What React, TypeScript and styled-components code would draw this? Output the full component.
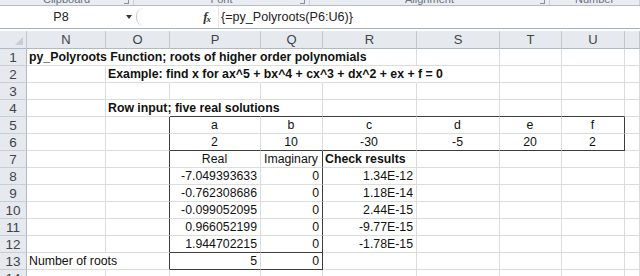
import React from "react";
import styled, { createGlobalStyle } from "styled-components";

const Global = createGlobalStyle`
  html, body { margin: 0; padding: 0; background: #fff; overflow: hidden; }
  body { font-family: "Liberation Sans", Arial, sans-serif; }
`;

const Page = styled.div`
  width: 640px;
  height: 276px;
  overflow: hidden;
  display: flex;
  flex-direction: column;
  background: #fff;
  & > * { flex-shrink: 0; }
`;

/* ---------- ribbon remnant ---------- */
const Ribbon = styled.div`
  height: 5px;
  display: flex;
  background: #e9edf2;
  border-bottom: 1px solid #b6bcc6;
  overflow: hidden;
`;

const RibbonGroup = styled.div<{ $w: number }>`
  width: ${(p) => p.$w}px;
  flex: none;
  position: relative;
  display: flex;
  align-items: flex-end;
  justify-content: center;
  border-right: 1px solid #c9cfd7;
  box-sizing: border-box;
`;

const RibbonLabel = styled.span`
  font-size: 11px;
  line-height: 11px;
  height: 11px;
  color: #6a6f76;
  white-space: nowrap;
`;

const Launcher = styled.span`
  position: absolute;
  right: 4px;
  bottom: 1px;
  width: 4px;
  height: 3px;
  border-right: 1px solid #8a9099;
  border-bottom: 1px solid #8a9099;
`;

/* ---------- formula bar ---------- */
const FormulaBar = styled.div`
  height: 22px;
  display: flex;
  align-items: stretch;
  background: #fff;
  border-bottom: 1px solid #a9b3c0;
`;

const NameBox = styled.div`
  width: 122px;
  flex: none;
  display: flex;
  align-items: center;
  justify-content: center;
  font-size: 12.6px;
  color: #222;
`;

const DropArrow = styled.div`
  width: 14px;
  flex: none;
  display: flex;
  align-items: center;
  justify-content: center;
  &::after {
    content: "";
    border-left: 3.5px solid transparent;
    border-right: 3.5px solid transparent;
    border-top: 4px solid #333;
  }
`;

const Grip = styled.div`
  width: 12px;
  flex: none;
  display: flex;
  align-items: center;
  &::before {
    content: "";
    width: 8px;
    height: 18px;
    border-left: 1.5px solid #c6ccd4;
    border-radius: 9px 0 0 9px;
    box-sizing: border-box;
  }
`;

const FxArea = styled.div`
  width: 70px;
  flex: none;
  display: flex;
  align-items: center;
  justify-content: flex-end;
  padding-right: 8px;
  box-sizing: border-box;
`;

const Fx = styled.span`
  font-family: "Liberation Serif", "Times New Roman", serif;
  font-style: italic;
  font-weight: bold;
  font-size: 13px;
  color: #333;
  letter-spacing: -1px;
  sub {
    font-size: 9px;
    vertical-align: -1px;
  }
`;

const FormulaInput = styled.div`
  flex: 1;
  display: flex;
  align-items: center;
  padding-left: 2px;
  font-size: 12.6px;
  color: #222;
  border-left: 1px solid #e3e6ea;
  white-space: nowrap;
`;

/* ---------- sheet ---------- */
const Sheet = styled.div`
  margin-top: 2px;
  display: grid;
  grid-template-columns: 27px 79px 64px 91px 62px 94px 83px 62px 63px 15px;
  grid-auto-rows: 17px;
  grid-template-rows: 18px;
`;

const Corner = styled.div`
  background: #e6e9ee;
  border-right: 1px solid #c3c8cf;
  border-bottom: 1px solid #b0b8c3;
  box-sizing: border-box;
  position: relative;
  &::after {
    content: "";
    position: absolute;
    right: 3px;
    bottom: 3px;
    border-left: 8px solid transparent;
    border-bottom: 8px solid #c9ced5;
  }
`;

const ColHead = styled.div`
  background: #e6e9ee;
  border-right: 1px solid #c3c8cf;
  border-bottom: 1px solid #b0b8c3;
  box-sizing: border-box;
  display: flex;
  align-items: center;
  justify-content: center;
  font-size: 13px;
  color: #3f4449;
`;

const RowHead = styled.div`
  background: #e6e9ee;
  border-right: 1px solid #b0b8c3;
  border-bottom: 1px solid #c9ced5;
  box-sizing: border-box;
  display: flex;
  align-items: center;
  justify-content: center;
  font-size: 13.5px;
  color: #3f4449;
`;

type Edge = "g" | "n" | "d";
const edgeColor = (e: Edge) => (e === "d" ? "#3d3d3d" : e === "n" ? "transparent" : "#dadcdd");

const Cell = styled.div<{ $r: Edge; $b: Edge; $align: string; $bold: boolean }>`
  box-sizing: border-box;
  border-right: 1px solid ${(p) => edgeColor(p.$r)};
  border-bottom: 1px solid ${(p) => edgeColor(p.$b)};
  font-size: 12.3px;
  line-height: 16px;
  color: #111;
  font-weight: ${(p) => (p.$bold ? 700 : 400)};
  text-align: ${(p) => p.$align};
  padding: 0 3px 0 2px;
  white-space: nowrap;
  overflow: visible;
  position: relative;
  z-index: ${(p) => (p.$r === "n" ? 1 : 0)};
`;

type CellSpec = { t?: string; a?: "l" | "c" | "r"; b?: boolean; r?: Edge; bb?: Edge };

const COLS = ["N", "O", "P", "Q", "R", "S", "T", "U", ""];

const empty = (): CellSpec => ({});

const rows: CellSpec[][] = [];
for (let i = 0; i < 15; i++) rows.push(COLS.map(empty));

const set = (row: number, col: number, s: CellSpec) => {
  rows[row - 1][col] = { ...rows[row - 1][col], ...s };
};

// text
set(1, 0, { t: "py_Polyroots Function; roots of higher order polynomials", b: true, r: "n" });
[1, 2, 3].forEach((c) => set(1, c, { r: "n" }));
set(2, 1, { t: "Example: find x for ax^5 + bx^4 + cx^3 + dx^2 + ex + f = 0", b: true, r: "n" });
[2, 3, 4].forEach((c) => set(2, c, { r: "n" }));
set(4, 1, { t: "Row input; five real solutions", b: true, r: "n" });
set(4, 2, { r: "n" });

const letters = ["a", "b", "c", "d", "e", "f"];
const coefs = ["2", "10", "-30", "-5", "20", "2"];
letters.forEach((l, i) => {
  set(5, i + 2, { t: l, a: "c" });
  set(6, i + 2, { t: coefs[i], a: "c" });
  set(4, i + 2, { bb: "d" });
  set(6, i + 2, { bb: "d" });
});
set(5, 1, { r: "d" });
set(6, 1, { r: "d" });
set(5, 7, { r: "d" });
set(6, 7, { r: "d" });

set(7, 2, { t: "Real", a: "c" });
set(7, 3, { t: "Imaginary", a: "c" });
set(7, 4, { t: "Check results", b: true });

const real = ["-7.049393633", "-0.762308686", "-0.099052095", "0.966052199", "1.944702215"];
const check = ["1.34E-12", "1.18E-14", "2.44E-15", "-9.77E-15", "-1.78E-15"];
real.forEach((v, i) => {
  set(8 + i, 2, { t: v, a: "r" });
  set(8 + i, 3, { t: "0", a: "r" });
  set(8 + i, 4, { t: check[i], a: "r" });
});
for (let r = 7; r <= 13; r++) {
  set(r, 1, { r: "d" });
  set(r, 3, { r: "d" });
}
set(12, 2, { bb: "d" });
set(12, 3, { bb: "d" });
set(13, 2, { bb: "d", t: "5", a: "r" });
set(13, 3, { bb: "d", t: "0", a: "r" });
set(13, 0, { t: "Number of roots", r: "n" });

const alignMap = { l: "left", c: "center", r: "right" };

const ribbonGroups = [
  { w: 134, label: "Clipboard", launcher: true },
  { w: 176, label: "Font", launcher: true },
  { w: 240, label: "Alignment", launcher: true },
  { w: 90, label: "Number", launcher: false },
];

export default function App() {
  return (
    <Page>
      <Global />
      <Ribbon>
        {ribbonGroups.map((g) => (
          <RibbonGroup key={g.label} $w={g.w}>
            <RibbonLabel>{g.label}</RibbonLabel>
            {g.launcher && <Launcher />}
          </RibbonGroup>
        ))}
      </Ribbon>
      <FormulaBar>
        <NameBox>P8</NameBox>
        <DropArrow />
        <Grip />
        <FxArea>
          <Fx>
            f<sub>x</sub>
          </Fx>
        </FxArea>
        <FormulaInput>{"{=py_Polyroots(P6:U6)}"}</FormulaInput>
      </FormulaBar>
      <Sheet>
        <Corner />
        {COLS.map((c, i) => (
          <ColHead key={"h" + i}>{c}</ColHead>
        ))}
        {rows.map((row, ri) => (
          <React.Fragment key={"r" + ri}>
            <RowHead>{ri + 1}</RowHead>
            {row.map((cell, ci) => (
              <Cell
                key={ci}
                $r={cell.r ?? "g"}
                $b={cell.bb ?? "g"}
                $align={alignMap[cell.a ?? "l"]}
                $bold={!!cell.b}
              >
                {cell.t ?? ""}
              </Cell>
            ))}
          </React.Fragment>
        ))}
      </Sheet>
    </Page>
  );
}
